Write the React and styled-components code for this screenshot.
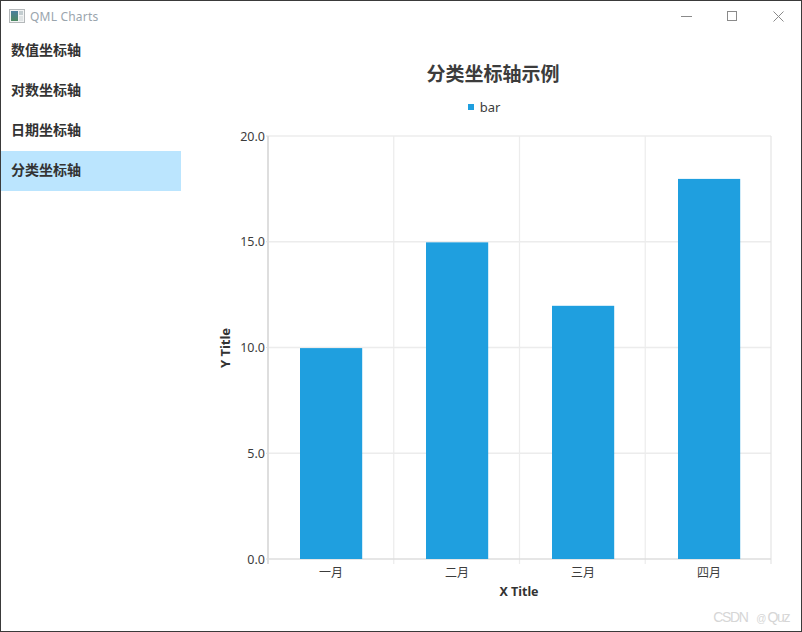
import React from "react";
import styled, { createGlobalStyle } from "styled-components";

const GlobalStyle = createGlobalStyle`
  html, body {
    margin: 0;
    padding: 0;
    background: #ffffff;
  }
`;

const fontStack = `"Noto Sans", "Noto Sans CJK SC", sans-serif`;

const Stage = styled.div`
  position: relative;
  width: 802px;
  height: 632px;
`;

const Window = styled.div`
  width: 802px;
  height: 632px;
  box-sizing: border-box;
  border: 1px solid #3a3a3a;
  display: flex;
  flex-direction: column;
  font-family: ${fontStack};
  color: #333333;
  overflow: hidden;
`;

const TitleBar = styled.div`
  height: 30px;
  display: flex;
  align-items: center;
  padding-left: 8px;
  flex-shrink: 0;
`;

const WindowName = styled.span`
  margin-left: 5px;
  font-size: 12px;
  color: #9aa5ad;
  letter-spacing: 0.2px;
`;

const WindowControls = styled.div`
  margin-left: auto;
  display: flex;
`;

const ControlButton = styled.div`
  width: 46px;
  height: 30px;
  display: flex;
  align-items: center;
  justify-content: center;
`;

const Body = styled.div`
  flex: 1;
  display: flex;
  min-height: 0;
`;

const Sidebar = styled.ul`
  width: 180px;
  margin: 0;
  padding: 0;
  list-style: none;
  flex-shrink: 0;
`;

const SidebarItem = styled.li`
  height: 40px;
  line-height: 38px;
  padding-left: 10px;
  font-size: 14px;
  font-weight: 700;
  color: #333333;
  background: ${(props) => (props.$active ? "#bbe5fe" : "transparent")};
`;

const ChartPanel = styled.div`
  flex: 1;
  display: flex;
  flex-direction: column;
  align-items: center;
`;

const ChartTitle = styled.div`
  margin: 28px 0 0 4px;
  height: 30px;
  line-height: 30px;
  font-size: 19px;
  font-weight: 700;
  color: #3c3c3c;
`;

const Legend = styled.div`
  margin: 8px 14px 0 0;
  height: 20px;
  display: flex;
  align-items: center;
  font-size: 13px;
  color: #3c3c3c;
`;

const LegendMark = styled.span`
  width: 6px;
  height: 6px;
  margin-right: 6px;
  background: #1f9fdf;
`;

const PlotSvg = styled.svg`
  display: block;
  margin-top: 8px;
  align-self: flex-start;
  font-family: ${fontStack};
`;

const Watermark = styled.div`
  position: absolute;
  right: 13px;
  bottom: 7px;
  display: flex;
  align-items: baseline;
  gap: 9px;
  font-family: "Liberation Sans", sans-serif;
  font-size: 14px;
  letter-spacing: -1.4px;
  color: #d6d6d6;
`;

const WatermarkAt = styled.span`
  font-size: 10px;
  letter-spacing: 0;
  margin-right: 1px;
`;

const menuItems = ["数值坐标轴", "对数坐标轴", "日期坐标轴", "分类坐标轴"];

// plot coordinates are relative to the svg, which starts at (181, 125)
const OX = 87;
const OY = 11;
const PLOT_W = 503;
const PLOT_H = 423;
const MAX_VALUE = 20;

const bars = [
  { label: "一月", value: 10 },
  { label: "二月", value: 15 },
  { label: "三月", value: 12 },
  { label: "四月", value: 18 },
];
const yTicks = [0, 5, 10, 15, 20];

const Plot = () => {
  const step = PLOT_W / bars.length;
  return (
    <PlotSvg width="620" height="475" viewBox="0 0 620 475">
      {yTicks.map((tick) => {
        const y = OY + PLOT_H - (tick / MAX_VALUE) * PLOT_H;
        return (
          <g key={tick}>
            {tick > 0 && (
              <line x1={OX} x2={OX + PLOT_W} y1={y} y2={y} stroke="#ececec" strokeWidth="1.5" />
            )}
            <line x1={OX - 2} x2={OX} y1={y} y2={y} stroke="#dcdcdc" strokeWidth="1" />
            <text x={OX - 3} y={y + 4.5} textAnchor="end" fontSize="12.5" fill="#3c3c3c">
              {tick.toFixed(1)}
            </text>
          </g>
        );
      })}
      {[1, 2, 3, 4].map((i) => (
        <line
          key={i}
          x1={OX + i * step}
          x2={OX + i * step}
          y1={OY}
          y2={OY + PLOT_H + 5}
          stroke={i === 4 ? "#e4e4e4" : "#ececec"}
          strokeWidth="1.2"
        />
      ))}
      <line x1={OX} x2={OX} y1={OY} y2={OY + PLOT_H + 5} stroke="#dedede" strokeWidth="2" />
      <line x1={OX} x2={OX + PLOT_W} y1={OY + PLOT_H} y2={OY + PLOT_H} stroke="#dedede" strokeWidth="1.5" />
      {bars.map((bar, i) => {
        const h = (bar.value / MAX_VALUE) * PLOT_H - 0.6;
        const x = OX + 32 + i * 126;
        return (
          <g key={bar.label}>
            <rect x={x} y={OY + PLOT_H - h} width="62.2" height={h} fill="#1f9fdf" />
            <text x={x + 31} y={OY + PLOT_H + 18} textAnchor="middle" fontSize="12" fill="#3c3c3c">
              {bar.label}
            </text>
          </g>
        );
      })}
      <text x="338" y={OY + PLOT_H + 37} textAnchor="middle" fontSize="12.5" fontWeight="700" fill="#333333">
        X Title
      </text>
      <text
        transform="translate(49, 223) rotate(-90)"
        textAnchor="middle"
        fontSize="13"
        fontWeight="700"
        fill="#333333"
      >
        Y Title
      </text>
    </PlotSvg>
  );
};

const AppIcon = () => (
  <svg width="16" height="14" viewBox="0 0 16 14">
    <defs>
      <linearGradient id="iconFill" x1="0" y1="0" x2="0" y2="1">
        <stop offset="0" stopColor="#4a7f9e" />
        <stop offset="1" stopColor="#4d8a62" />
      </linearGradient>
    </defs>
    <rect x="0.5" y="0.5" width="15" height="13" fill="#f2f4f4" stroke="#b4b8ba" />
    <rect x="2" y="2" width="7" height="10" fill="url(#iconFill)" />
    <rect x="10" y="2" width="4" height="4" fill="#c3cdd0" />
    <rect x="10" y="7" width="4" height="5" fill="#dfe3e4" />
  </svg>
);

export default function App() {
  return (
    <Stage>
      <GlobalStyle />
      <Window>
        <TitleBar>
          <AppIcon />
          <WindowName>QML Charts</WindowName>
          <WindowControls>
            <ControlButton>
              <svg width="11" height="11" viewBox="0 0 11 11">
                <line x1="0" x2="11" y1="5.5" y2="5.5" stroke="#8a8a8a" />
              </svg>
            </ControlButton>
            <ControlButton>
              <svg width="11" height="11" viewBox="0 0 11 11">
                <rect x="0.5" y="0.5" width="9" height="9" fill="none" stroke="#8a8a8a" />
              </svg>
            </ControlButton>
            <ControlButton>
              <svg width="11" height="11" viewBox="0 0 11 11">
                <path d="M0.5 0.5 L10.5 10.5 M10.5 0.5 L0.5 10.5" stroke="#8a8a8a" fill="none" />
              </svg>
            </ControlButton>
          </WindowControls>
        </TitleBar>
        <Body>
          <Sidebar>
            {menuItems.map((item, i) => (
              <SidebarItem key={item} $active={i === 3}>
                {item}
              </SidebarItem>
            ))}
          </Sidebar>
          <ChartPanel>
            <ChartTitle>分类坐标轴示例</ChartTitle>
            <Legend>
              <LegendMark />
              bar
            </Legend>
            <Plot />
          </ChartPanel>
        </Body>
      </Window>
      <Watermark>
        <span>CSDN</span>
        <span>
          <WatermarkAt>@</WatermarkAt>Quz
        </span>
      </Watermark>
    </Stage>
  );
}
